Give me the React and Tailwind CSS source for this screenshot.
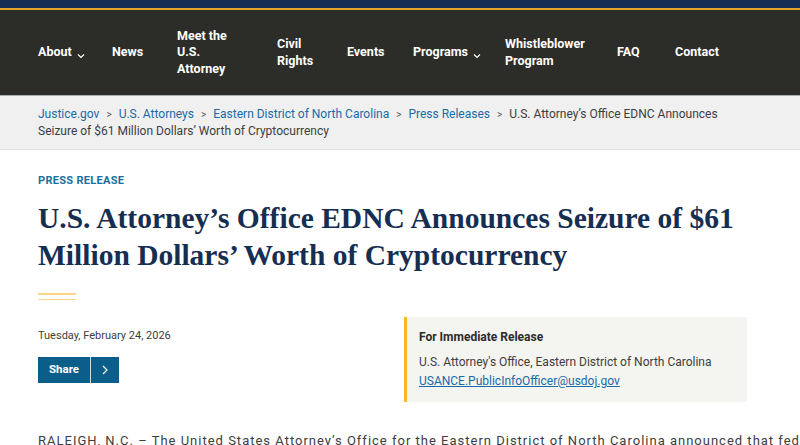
import React from "react";

const sans = { fontFamily: 'Roboto, "Liberation Sans", sans-serif' };

function Chevron() {
  return (
    <svg width="8" height="6" viewBox="0 0 8 6" className="ml-[5px] mt-[6px]">
      <path d="M1 1.5 L4 4.5 L7 1.5" fill="none" stroke="white" strokeWidth="1.2" />
    </svg>
  );
}

function NavItem({ children, chevron }) {
  return (
    <div className="flex items-center text-white font-bold text-[12.5px] leading-[16.5px]">
      <span>{children}</span>
      {chevron && <Chevron />}
    </div>
  );
}

function Sep() {
  return <span className="mx-[7px] text-[#555] text-[10px]">&gt;</span>;
}

export default function App() {
  return (
    <div className="w-[800px] h-[445px] overflow-hidden bg-white" style={sans}>
      <div className="h-[8px] bg-[#162e51]" />
      <div className="h-[2px] bg-[#e5a423]" />
      <nav className="h-[85px] bg-[#2c2c28] flex items-center pl-[38px]">
        <div className="w-[74px]"><NavItem chevron>About</NavItem></div>
        <div className="w-[65px]"><NavItem>News</NavItem></div>
        <div className="w-[100px]"><NavItem>Meet the<br />U.S.<br />Attorney</NavItem></div>
        <div className="w-[70px]"><NavItem>Civil<br />Rights</NavItem></div>
        <div className="w-[66px]"><NavItem>Events</NavItem></div>
        <div className="w-[92px]"><NavItem chevron>Programs</NavItem></div>
        <div className="w-[112px]"><NavItem>Whistleblower<br />Program</NavItem></div>
        <div className="w-[58px]"><NavItem>FAQ</NavItem></div>
        <div><NavItem>Contact</NavItem></div>
      </nav>
      <div className="bg-[#f0f0f0] border-t border-[#a9aeb1] border-b border-b-[#dfe1e2] pl-[38px] pr-[20px] pt-[10px] pb-[9px] text-[12px] leading-[17px] text-[#3d3d3d]">
        <span className="text-[#1a6aa8]">Justice.gov</span>
        <Sep />
        <span className="text-[#1a6aa8]">U.S. Attorneys</span>
        <Sep />
        <span className="text-[#1a6aa8]">Eastern District of North Carolina</span>
        <Sep />
        <span className="text-[#1a6aa8]">Press Releases</span>
        <Sep />
        <span>U.S. Attorney’s Office EDNC Announces</span>
        <br />
        <span>Seizure of $61 Million Dollars’ Worth of Cryptocurrency</span>
      </div>
      <div className="px-[38px]">
        <div className="pt-[24px] text-[11px] font-bold tracking-[0.3px] text-[#1a6e9e] leading-[14px]">PRESS RELEASE</div>
        <h1
          className="mt-[12px] text-[#162e51] font-bold text-[29.5px] leading-[37px]"
          style={{ fontFamily: '"Liberation Serif", "DejaVu Serif", serif' }}
        >
          U.S. Attorney’s Office EDNC Announces Seizure of $61<br />Million Dollars’ Worth of Cryptocurrency
        </h1>
        <div className="mt-[19px] w-[38px]">
          <div className="h-[1.5px] bg-[#ffd58a]" />
          <div className="h-[4px]" />
          <div className="h-[1.5px] bg-[#ffd58a]" />
        </div>
        <div className="flex mt-[17px]">
          <div className="w-[366px] pt-[12px]">
            <div className="text-[11px] text-[#3d3d3d] leading-[14px]">Tuesday, February 24, 2026</div>
            <div className="mt-[14px] flex h-[26px] w-[81px] bg-[#0b5e8a] text-white text-[11.5px] font-bold">
              <div className="w-[53px] flex items-center justify-center border-r border-white/80">Share</div>
              <div className="flex-1 flex items-center justify-center">
                <svg width="6" height="10" viewBox="0 0 6 10">
                  <path d="M1 1 L5 5 L1 9" fill="none" stroke="white" strokeWidth="1.2" />
                </svg>
              </div>
            </div>
          </div>
          <div className="w-[343px] bg-[#f4f4f0] border-l-[3px] border-[#fbb824] pl-[12px] pt-[11px] pb-[11px] text-[12px] leading-[19px] text-[#3d3d3d]">
            <div className="font-bold text-[#2b2b2b]">For Immediate Release</div>
            <div className="mt-[6px]">U.S. Attorney's Office, Eastern District of North Carolina</div>
            <div className="text-[#1a6aa8] underline">USANCE.PublicInfoOfficer@usdoj.gov</div>
          </div>
        </div>
        <div className="mt-[30px] text-[13px] leading-[18px] text-[#3d3d3d] whitespace-nowrap tracking-[1px]">
          RALEIGH, N.C. – The United States Attorney’s Office for the Eastern District of North Carolina announced that federal agents
        </div>
      </div>
    </div>
  );
}
